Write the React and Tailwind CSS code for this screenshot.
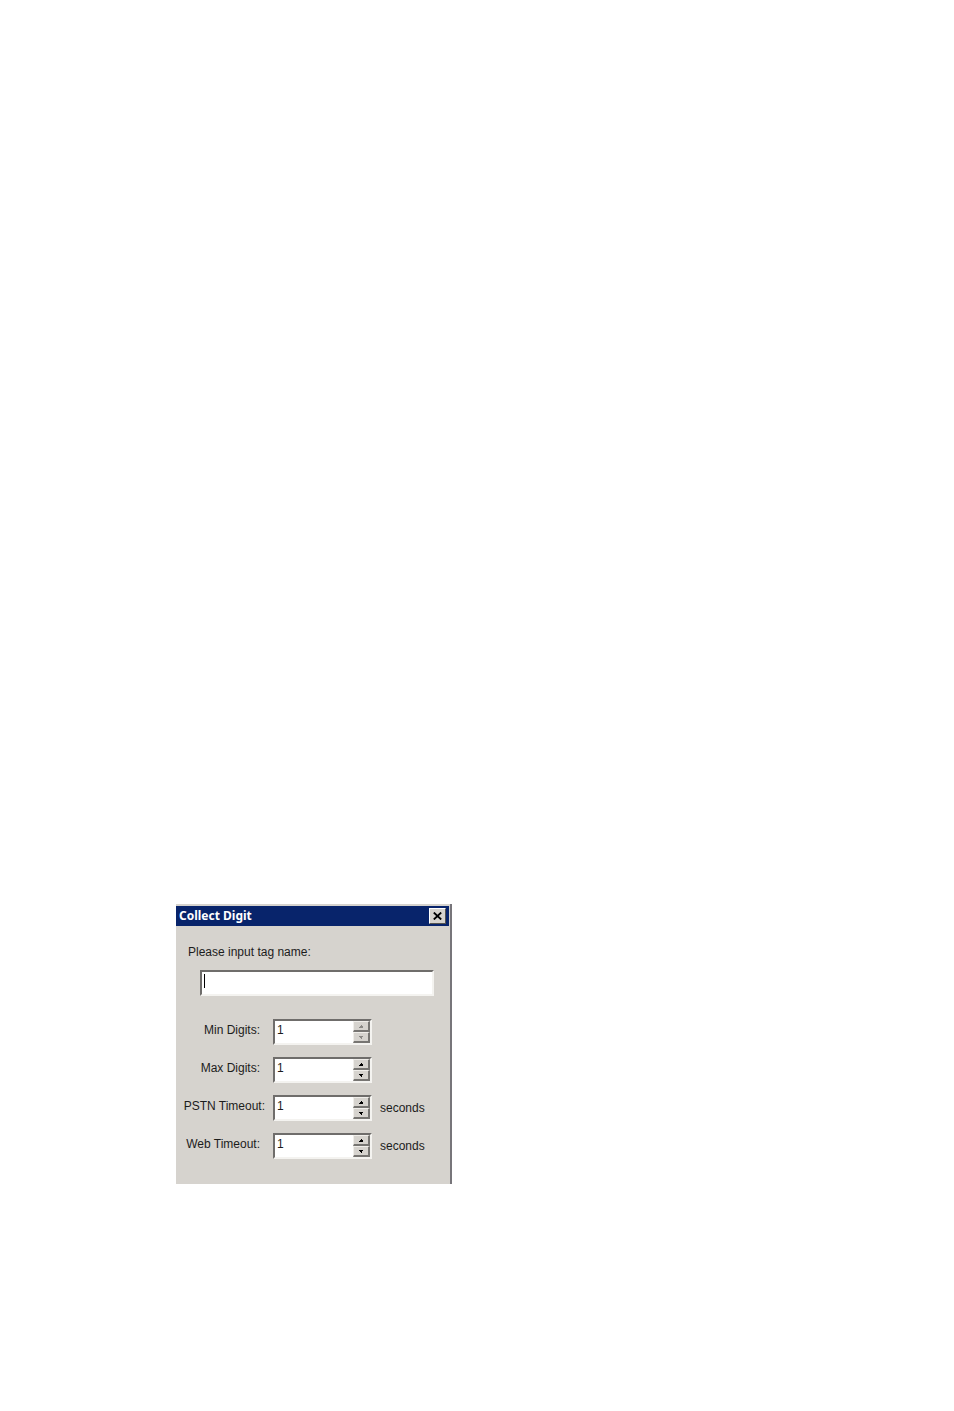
import React, { useState } from 'react'

const fields = [
    { id: 'minDigits', label: 'Min Digits:', unit: '', disabled: true },
    { id: 'maxDigits', label: 'Max Digits:', unit: '', disabled: false },
    { id: 'pstnTimeout', label: 'PSTN Timeout:', unit: 'seconds', wide: true },
    { id: 'webTimeout', label: 'Web Timeout:', unit: 'seconds' },
]

const sunkenCss = "bg-white border-2 border-t-[#6f6d6b] border-l-[#6f6d6b] border-b-[#f4f3f0] border-r-[#f4f3f0]"

export default function App() {

    const [tagName, setTagName] = useState('');

    return (
        <div className='min-h-screen bg-white pt-[904px] pl-44 text-xs text-[#1c1c1c] font-["Liberation_Sans",Arial,sans-serif]'>
            <form className='w-[276px] bg-[#d6d3ce] border-r-2 border-[#77757a] pt-0.5 pb-[25px]' onSubmit={(e) => e.preventDefault()}>

                {/* TITLE BAR */}
                <div className='mr-px flex h-5 items-center justify-between bg-[#08246b] pl-[3px] pr-[3px]'>
                    <h1 className='text-xs font-bold text-white font-["Noto_Sans",Tahoma,sans-serif]'>Collect Digit</h1>
                    <button type='button' aria-label='Close' className='flex h-4 w-[17px] items-center justify-center bg-[#d6d3ce] border border-t-white border-l-white border-b-[#55534f] border-r-[#55534f]'>
                        <svg width='9' height='8' viewBox='0 0 9 8' stroke='#000' strokeWidth='1.8'>
                            <path d='M0.8 0.5L8.2 7.5M8.2 0.5L0.8 7.5' />
                        </svg>
                    </button>
                </div>

                <div className='pt-[18px] pl-3 pr-4'>
                    <label htmlFor='tagName' className='block leading-4'>Please input tag name:</label>
                    <div className='relative mt-2.5 ml-3'>
                        <input id='tagName' value={tagName} onChange={(e) => setTagName(e.target.value)} className={`block h-[26px] w-full px-1 outline-none ${sunkenCss}`} />
                        {/* text cursor */}
                        <span className='absolute left-1 top-1 h-3.5 w-px bg-black'></span>
                    </div>
                </div>

                <div className='mt-[23px] flex flex-col gap-3'>
                    {fields.map((field) => <SpinField key={field.id} field={field} />)}
                </div>
            </form>
        </div>
    )
}

function SpinField({ field }) {

    const [value, setValue] = useState('1');

    const step = (amount) => setValue(String(Math.max(1, Number(value) + amount)));

    return (
        <div className='flex'>
            <label htmlFor={field.id} className={`w-[89px] pt-[3px] text-right leading-4 whitespace-nowrap ${field.wide ? '' : 'pr-[5px]'}`}>{field.label}</label>
            <div className={`ml-2 flex h-[26px] w-[99px] ${sunkenCss}`}>
                <input id={field.id} value={value} onChange={(e) => setValue(e.target.value)} className='min-w-0 flex-1 pl-0.5 pb-1 outline-none' />
                <div className='flex w-[17px] flex-col'>
                    <StepButton label={`Increase ${field.label}`} disabled={field.disabled} onClick={() => step(1)} points='0,3 0,2 1,2 1,1 2,1 2,0 3,0 3,1 4,1 4,3' />
                    <StepButton label={`Decrease ${field.label}`} disabled={field.disabled} onClick={() => step(-1)} points='0,0 4,0 4,1 3,1 3,3 2,3 2,2 1,2 1,1 0,1' />
                </div>
            </div>
            {field.unit && <span className='ml-2 pt-[5px] leading-4'>{field.unit}</span>}
        </div>
    )
}

function StepButton({ label, disabled, onClick, points }) {
    return (
        <button type='button' aria-label={label} disabled={disabled} onClick={onClick} className='flex flex-1 items-center justify-center bg-[#d6d3ce] border border-t-[#f0eeea] border-l-[#f0eeea] border-b-2 border-r-2 border-b-[#777572] border-r-[#777572]'>
            <svg width='4' height='3' viewBox='0 0 4 3' className={disabled ? 'fill-[#8a8885]' : 'fill-black'}>
                <polygon points={points} />
            </svg>
        </button>
    )
}
